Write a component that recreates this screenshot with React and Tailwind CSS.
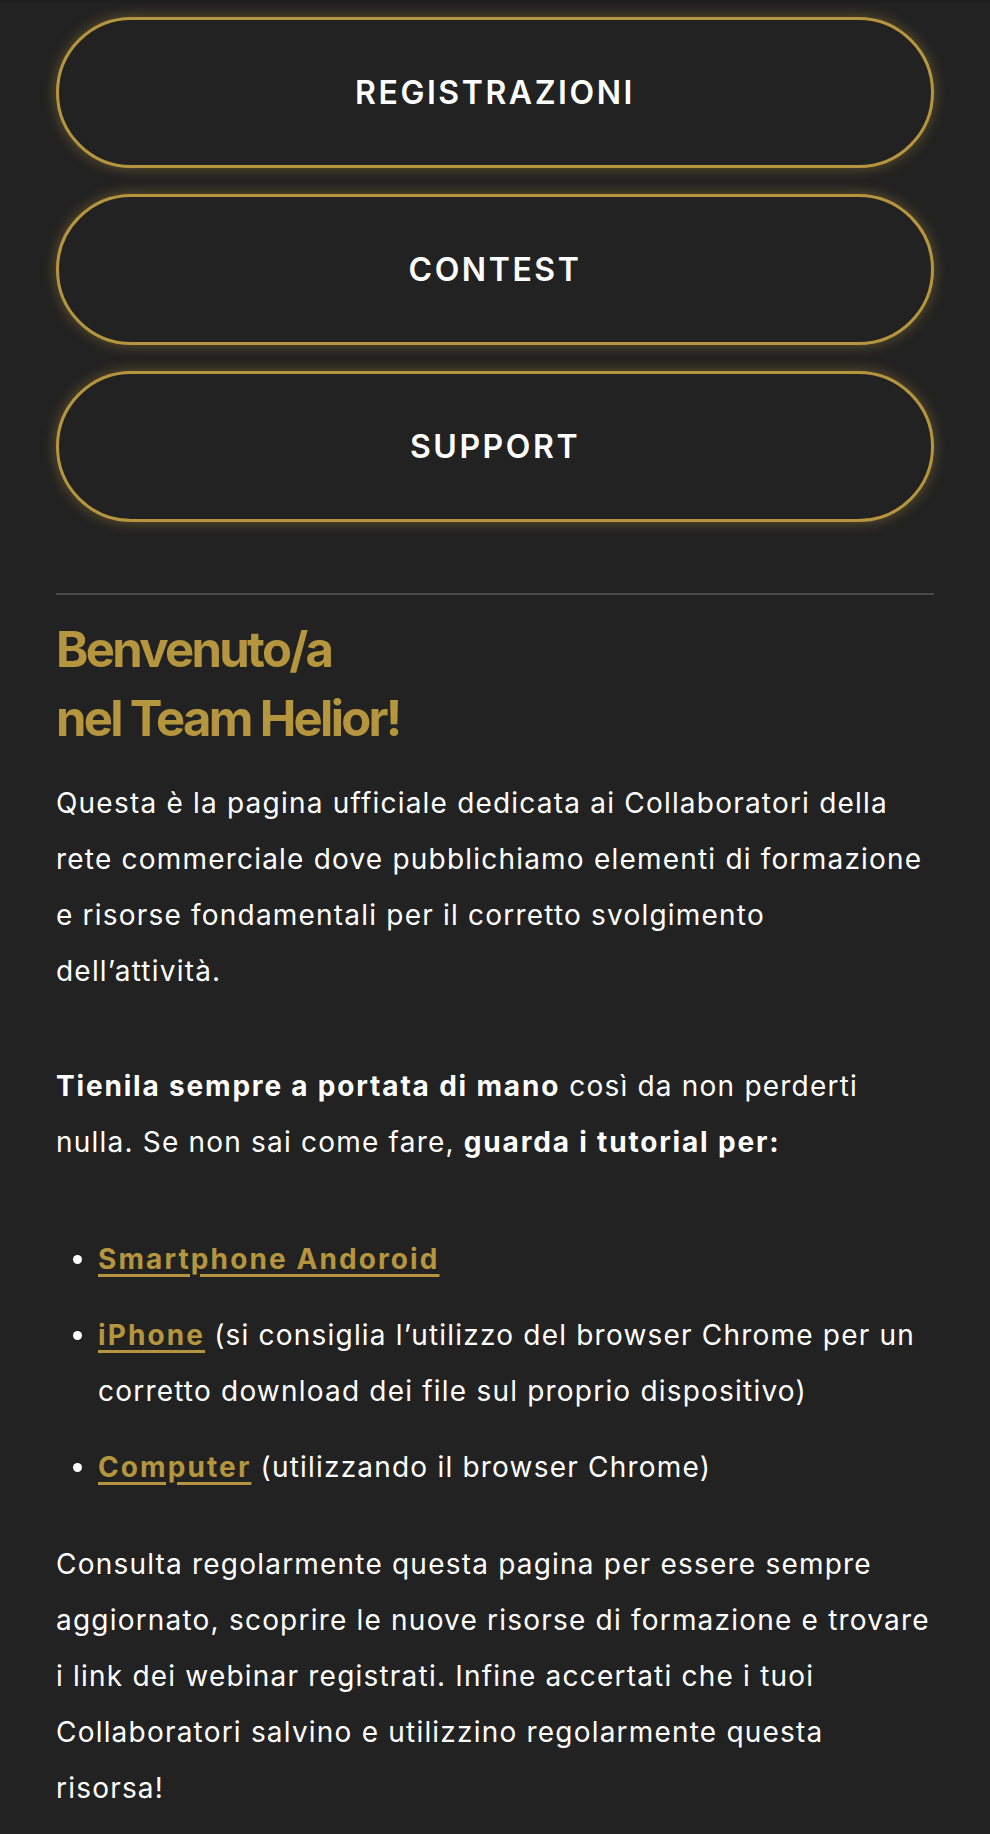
import React from 'react';

const gold = 'text-[#b5963f]';
const linkCls = `font-bold tracking-[0.075em] underline decoration-[2.5px] underline-offset-[5px] ${gold}`;

const NavButton = ({ label }) => (
    <a
        href="#"
        className="flex h-[151px] items-center justify-center rounded-full border-[3.5px] border-[#b5963f] bg-[#222222] shadow-[0_0_14px_rgba(181,150,63,0.45)]"
    >
        <span className="text-[32px] font-semibold tracking-[0.08em] text-white">{label}</span>
    </a>
);

const App = () => {
    return (
        <div className="min-h-screen bg-[#222222] font-['Inter',sans-serif] text-white">
            <div className="relative z-10 h-[2px] bg-[#1f1f1f]"></div>
            <div className="px-[56px] pb-[18px]">
                <div className="flex flex-col gap-[26px] pt-[15px]">
                    <NavButton label="REGISTRAZIONI" />
                    <NavButton label="CONTEST" />
                    <NavButton label="SUPPORT" />
                </div>

                <hr className="mt-[71px] border-t-2 border-[#4a4a4a]" />

                <h1 className={`mt-[20px] text-[49px] font-bold leading-[69px] tracking-[-0.055em] ${gold}`}>
                    Benvenuto/a
                    <br />
                    nel Team Helior!
                </h1>

                <div className="text-[28px] leading-[56px] tracking-[0.043em]">
                    <p className="mt-[22px]">
                        Questa è la pagina ufficiale dedicata ai Collaboratori della rete commerciale dove
                        pubblichiamo elementi di formazione e risorse fondamentali per il corretto svolgimento
                        dell’attività.
                    </p>
                    <p className="mt-[59px]">
                        <strong className="font-bold tracking-[0.065em]">Tienila sempre a portata di mano</strong>{' '}
                        così da non perderti nulla. Se non sai come fare,{' '}
                        <strong className="font-bold tracking-[0.065em]">guarda i tutorial per:</strong>
                    </p>
                    <ul className="mt-[61px] flex list-disc flex-col gap-[20px] pl-[42px] marker:text-white">
                        <li>
                            <a href="#" className={linkCls}>
                                Smartphone Andoroid
                            </a>
                        </li>
                        <li>
                            <a href="#" className={linkCls}>
                                iPhone
                            </a>{' '}
                            (si consiglia l’utilizzo del browser Chrome per un corretto download dei file sul proprio
                            dispositivo)
                        </li>
                        <li>
                            <a href="#" className={linkCls}>
                                Computer
                            </a>{' '}
                            (utilizzando il browser Chrome)
                        </li>
                    </ul>
                    <p className="mt-[41px]">
                        Consulta regolarmente questa pagina per essere sempre aggiornato, scoprire le nuove risorse di
                        formazione e trovare i link dei webinar registrati. Infine accertati che i tuoi Collaboratori
                        salvino e utilizzino regolarmente questa risorsa!
                    </p>
                </div>
            </div>
        </div>
    );
};

export default App;
